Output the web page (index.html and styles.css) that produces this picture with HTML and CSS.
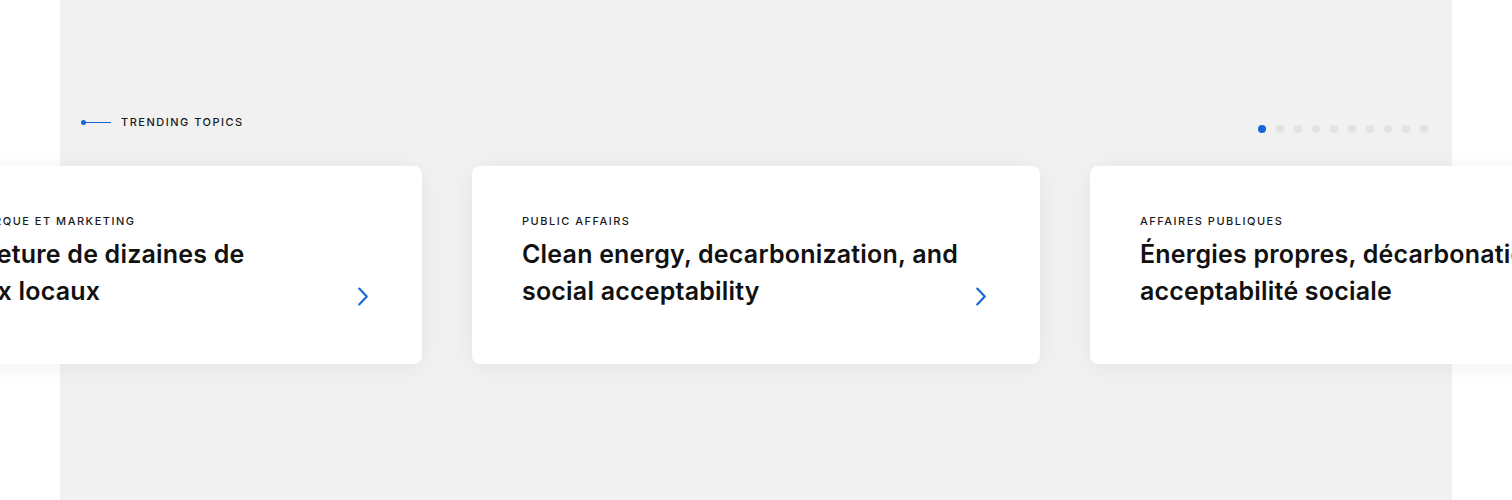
FILE: index.html
```html
<!DOCTYPE html>
<html lang="en">
<head>
<meta charset="utf-8">
<title>Trending topics</title>
<link rel="stylesheet" href="styles.css">
</head>
<body>
<section class="trending">
  <div class="trending-head">
    <div class="eyebrow">
      <span class="eyebrow-mark"><span class="eyebrow-dot"></span><span class="eyebrow-line"></span></span>
      <span class="eyebrow-text">TRENDING TOPICS</span>
    </div>
    <div class="pager">
      <span class="pager-dot is-active"></span>
      <span class="pager-dot"></span>
      <span class="pager-dot"></span>
      <span class="pager-dot"></span>
      <span class="pager-dot"></span>
      <span class="pager-dot"></span>
      <span class="pager-dot"></span>
      <span class="pager-dot"></span>
      <span class="pager-dot"></span>
      <span class="pager-dot"></span>
    </div>
  </div>
  <div class="track">
    <a class="card" href="#">
      <div class="card-body">
        <div class="card-cat">IMAGE DE MARQUE ET MARKETING</div>
        <div class="card-title">La fermeture de dizaines de journaux locaux</div>
      </div>
      <svg class="card-arrow" viewBox="0 0 12 19" width="12" height="19"><path d="M2.2 1.5 L9.8 9.5 L2.2 17.5" fill="none" stroke="#1466d6" stroke-width="2.1" stroke-linecap="round" stroke-linejoin="round"/></svg>
    </a>
    <a class="card" href="#">
      <div class="card-body">
        <div class="card-cat">PUBLIC AFFAIRS</div>
        <div class="card-title">Clean energy, decarbonization, and social acceptability</div>
      </div>
      <svg class="card-arrow" viewBox="0 0 12 19" width="12" height="19"><path d="M2.2 1.5 L9.8 9.5 L2.2 17.5" fill="none" stroke="#1466d6" stroke-width="2.1" stroke-linecap="round" stroke-linejoin="round"/></svg>
    </a>
    <a class="card" href="#">
      <div class="card-body">
        <div class="card-cat">AFFAIRES PUBLIQUES</div>
        <div class="card-title">Énergies propres, décarbonation et acceptabilité sociale</div>
      </div>
      <svg class="card-arrow" viewBox="0 0 12 19" width="12" height="19"><path d="M2.2 1.5 L9.8 9.5 L2.2 17.5" fill="none" stroke="#1466d6" stroke-width="2.1" stroke-linecap="round" stroke-linejoin="round"/></svg>
    </a>
  </div>
</section>
</body>
</html>
```
FILE: styles.css
```css
html, body {
  margin: 0;
  padding: 0;
  background: #ffffff;
  overflow: hidden;
}
body {
  font-family: "Inter", "Liberation Sans", sans-serif;
  color: #111111;
  height: 500px;
}
.trending {
  margin: 0 60px;
  height: 500px;
  background: #f1f1f2;
}
.trending-head {
  display: flex;
  justify-content: space-between;
  align-items: flex-start;
  padding: 115px 24px 0 21px;
  margin-bottom: 33px;
}
.eyebrow {
  display: flex;
  align-items: center;
  gap: 10px;
  height: 14px;
}
.eyebrow-mark {
  display: flex;
  align-items: center;
}
.eyebrow-dot {
  width: 5px;
  height: 5px;
  border-radius: 50%;
  background: #1466d6;
}
.eyebrow-line {
  width: 25px;
  height: 1px;
  background: #1466d6;
}
.eyebrow-text {
  font-size: 11px;
  line-height: 14px;
  letter-spacing: 1.5px;
  font-weight: 500;
  color: #1a1a1a;
}
.pager {
  display: flex;
  gap: 10px;
  padding-top: 10px;
}
.pager-dot {
  width: 8px;
  height: 8px;
  border-radius: 50%;
  background: #e3e3e5;
}
.pager-dot.is-active {
  background: #1466d6;
}
.track {
  display: flex;
  gap: 50px;
  transform: translateX(-206px);
}
.card {
  flex: 0 0 568px;
  height: 198px;
  box-sizing: border-box;
  background: #ffffff;
  border-radius: 8px;
  box-shadow: 0 3px 26px rgba(20, 20, 50, 0.06);
  padding: 48px 50px 0 50px;
  display: flex;
  justify-content: space-between;
  align-items: flex-start;
  text-decoration: none;
  color: inherit;
}
.card-body {
  width: 440px;
}
.card-cat {
  font-size: 11px;
  letter-spacing: 1.5px;
  font-weight: 500;
  line-height: 14px;
  color: #1a1a1a;
}
.card-title {
  margin-top: 8px;
  font-size: 25px;
  line-height: 37px;
  font-weight: 600;
  letter-spacing: 0.2px;
  color: #111111;
}
.card-arrow {
  flex: 0 0 auto;
  margin-top: 73px;
  margin-right: 3px;
}
```
